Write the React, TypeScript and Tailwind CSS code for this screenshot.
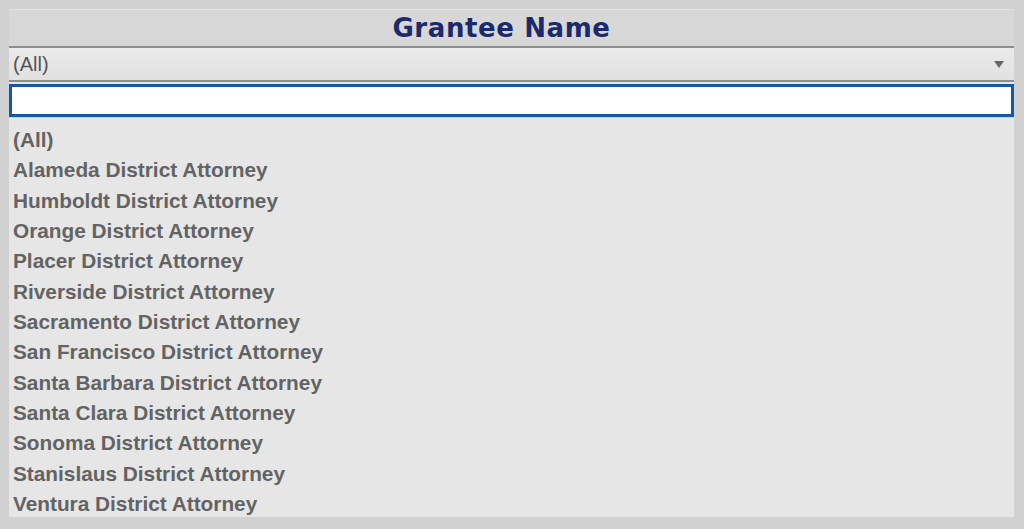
const grantees = [
  '(All)',
  'Alameda District Attorney',
  'Humboldt District Attorney',
  'Orange District Attorney',
  'Placer District Attorney',
  'Riverside District Attorney',
  'Sacramento District Attorney',
  'San Francisco District Attorney',
  'Santa Barbara District Attorney',
  'Santa Clara District Attorney',
  'Sonoma District Attorney',
  'Stanislaus District Attorney',
  'Ventura District Attorney',
]

export default function App() {
  return (
    <div className="w-[1024px] h-[529px] bg-[#d1d1d1] pl-[9px] pr-[10px] pt-[9px] overflow-hidden font-['Liberation_Sans',Arial,sans-serif]">
      <div className="flex flex-col w-[1005px]">
        {/* header */}
        <div className="h-[37px] bg-[#d7d7d7] border-t border-[#e2e2e2] flex items-center justify-center pr-[20px]">
          <h1 className="text-[26px] leading-none font-bold text-[#1c2a6b] font-['DejaVu_Sans',Verdana,sans-serif] tracking-[0.6px]">
            Grantee Name
          </h1>
        </div>
        <div className="h-[2px] bg-[#8e8e8e]" />

        {/* select */}
        <div className="h-[34px] bg-gradient-to-b from-[#eaeaea] to-[#e1e1e1] flex items-center justify-between pl-[4px] pr-[10px] border-b-2 border-[#8f8f8f]">
          <span className="text-[20px] text-[#555]">(All)</span>
          <svg width="10" height="7" viewBox="0 0 10 7">
            <path d="M0 0h10L5 7z" fill="#666" />
          </svg>
        </div>

        {/* search */}
        <div className="bg-[#e6e6e6] pt-[2px]">
          <input className="block w-full h-[33px] bg-white border-[3px] border-[#1758a6] outline-none" />
        </div>

        {/* list */}
        <div className="h-[400px] bg-[#e6e6e6] pt-[7px] pl-[4px] border-t border-[#d2d2d2]">
          {grantees.map((g) => (
            <div key={g} className="h-[30.33px] leading-[30.33px] text-[20.8px] font-bold text-[#636363]">
              {g}
            </div>
          ))}
        </div>
      </div>
    </div>
  )
}
